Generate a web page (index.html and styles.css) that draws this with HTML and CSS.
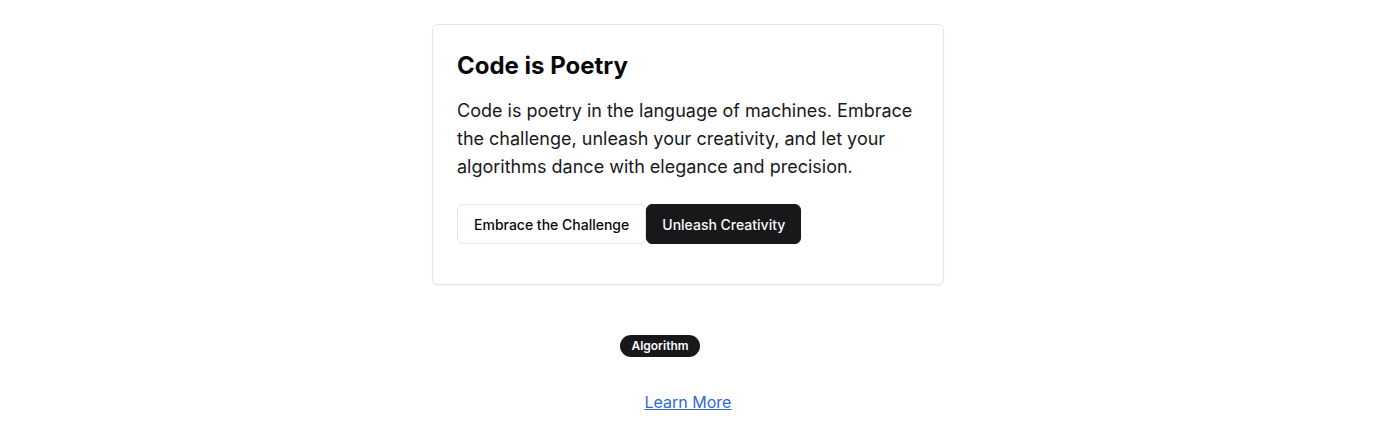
FILE: index.html
```html
<!DOCTYPE html>
<html>
<head>
<meta charset="utf-8">
<link rel="stylesheet" href="styles.css">
</head>
<body>
<main class="page">
  <section class="card">
    <h2 class="card-title">Code is Poetry</h2>
    <p class="card-text">Code is poetry in the language of machines. Embrace the challenge, unleash your creativity, and let your algorithms dance with elegance and precision.</p>
    <div class="actions">
      <button class="btn btn-outline">Embrace the Challenge</button>
      <button class="btn btn-dark">Unleash Creativity</button>
    </div>
  </section>
  <div class="badge-row">
    <span class="badge">Algorithm</span>
  </div>
  <a class="link" href="#">Learn More</a>
</main>
</body>
</html>
```

FILE: styles.css
```css
* { box-sizing: border-box; }
html, body { margin: 0; padding: 0; background: #fff; }
body {
  font-family: Inter, "Noto Sans", sans-serif;
  color: #0a0a0a;
}
.page {
  display: flex;
  flex-direction: column;
  align-items: center;
  padding-top: 24px;
}
.card {
  width: 512px;
  border: 1px solid #e4e4e7;
  border-radius: 6px;
  box-shadow: 0 1px 2px rgba(0,0,0,0.05);
  padding: 25px 24px 40px 24px;
}
.card-title {
  margin: 0;
  font-size: 24px;
  line-height: 32px;
  font-weight: 700;
  letter-spacing: 0;
  color: #09090b;
}
.card-text {
  margin: 15px 0 0 0;
  font-size: 18px;
  line-height: 28px;
  color: #18181b;
}
.actions {
  display: flex;
  margin-top: 23px;
}
.btn {
  height: 40px;
  padding: 0 16px;
  font-family: inherit;
  font-size: 14px;
  font-weight: 500;
  border-radius: 6px;
  cursor: pointer;
}
.btn-outline {
  background: #fff;
  color: #09090b;
  border: 1px solid #e4e4e7;
}
.btn-dark {
  padding: 0 15px;
  background: #18181b;
  color: #fafafa;
  border: 1px solid #18181b;
}
.badge-row {
  display: flex;
  justify-content: center;
  margin-top: 50px;
}
.badge {
  margin-right: 56px;
  background: #18181b;
  color: #fafafa;
  font-size: 12px;
  font-weight: 600;
  line-height: 16px;
  padding: 3px 11px;
  border-radius: 999px;
}
.link {
  margin-top: 33px;
  font-size: 16px;
  line-height: 24px;
  color: #3169d0;
  text-decoration: underline;
}
```
